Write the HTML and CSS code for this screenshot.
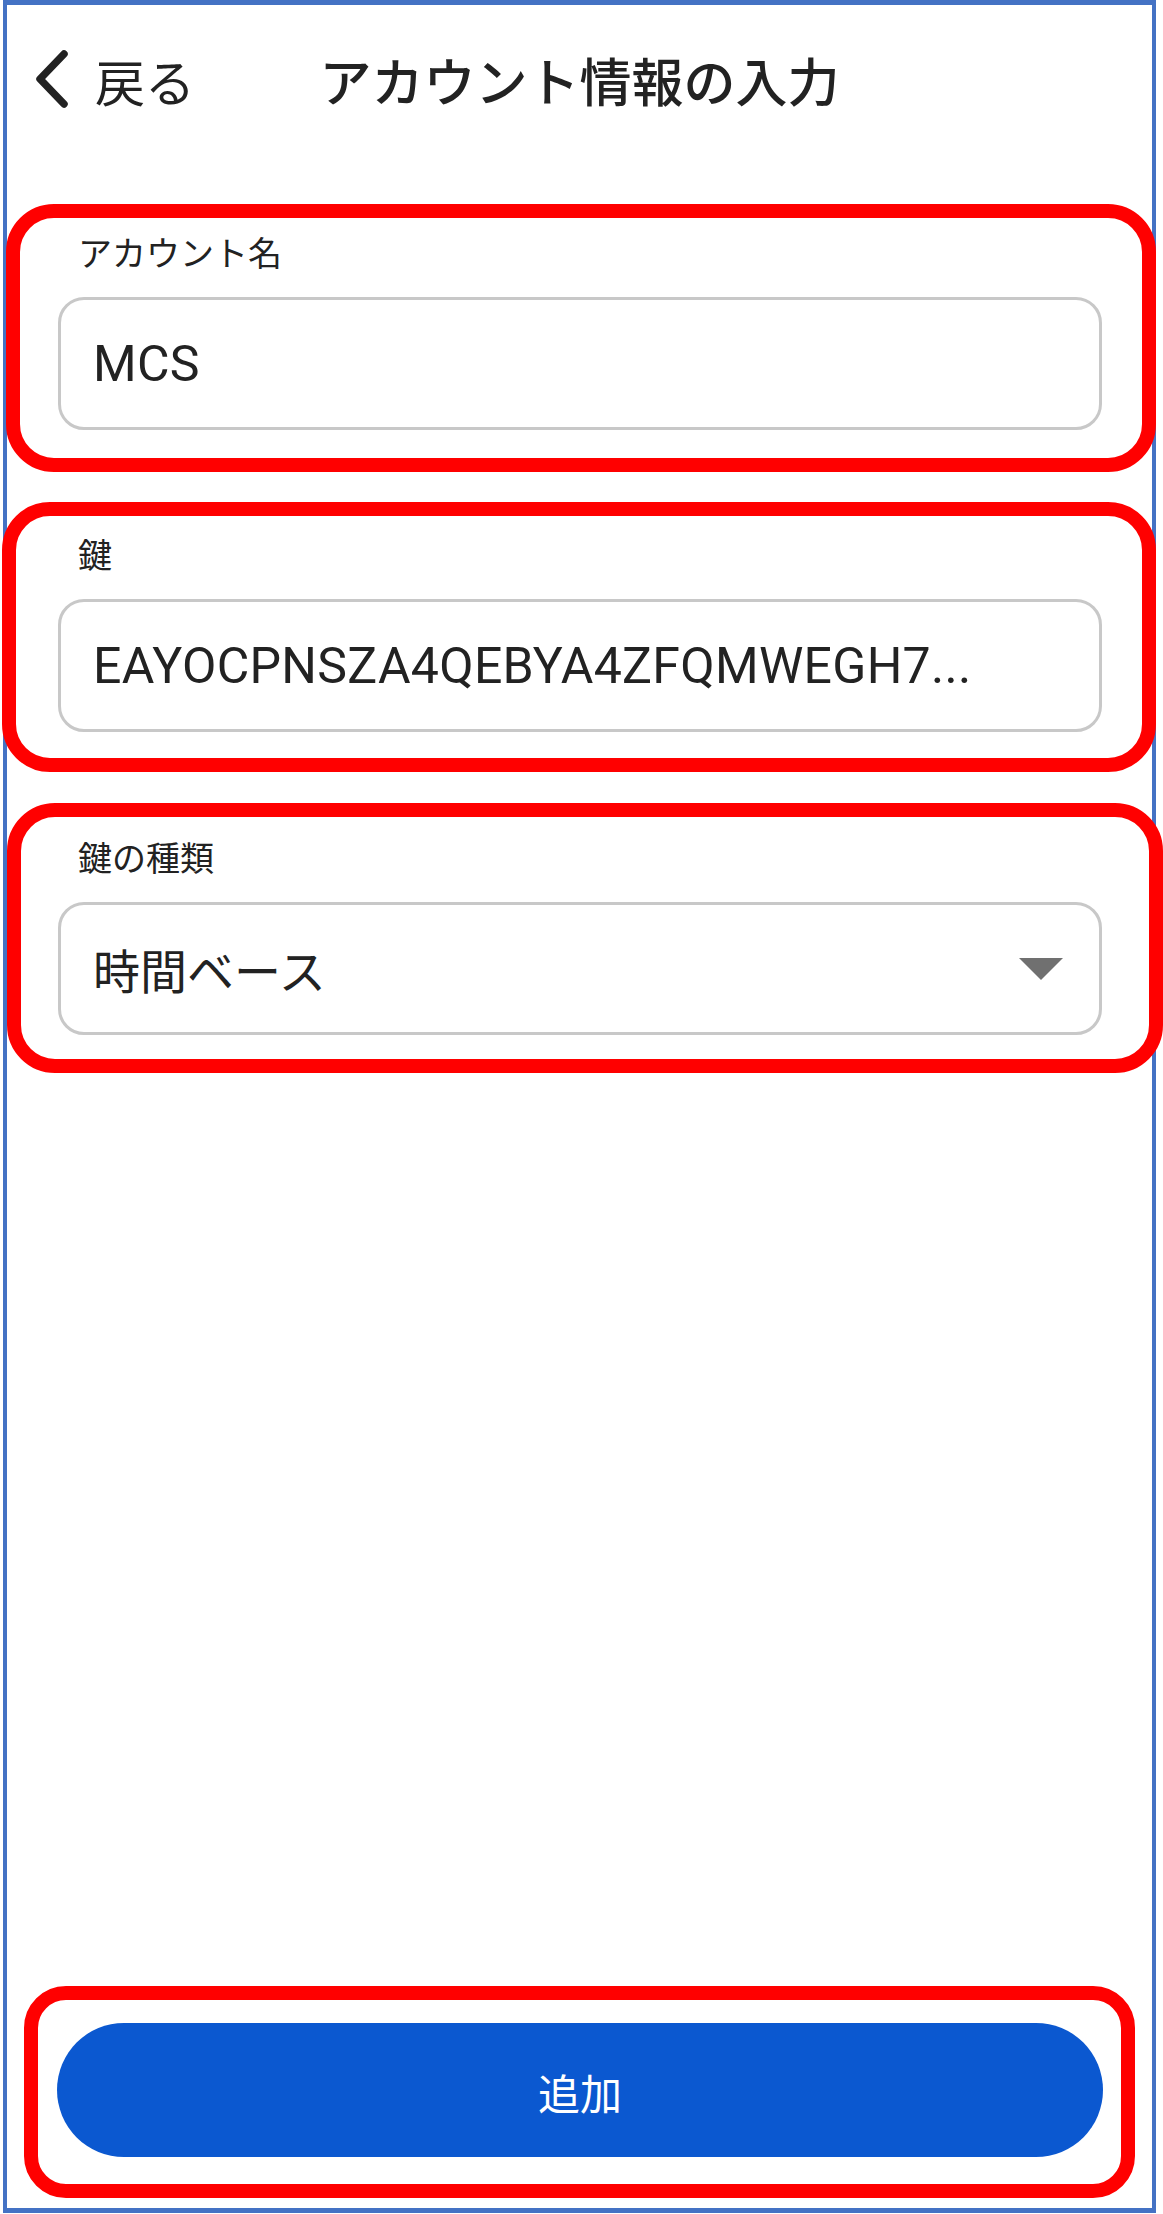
FILE: index.html
```html
<!DOCTYPE html>
<html lang="ja">
<head>
<meta charset="utf-8">
<title>アカウント情報の入力</title>
<link rel="stylesheet" href="styles.css">
</head>
<body>
<div class="frame">
  <header class="nav">
    <div class="back">
      <svg class="chev" viewBox="0 0 40 60" width="40" height="60" aria-hidden="true"><polyline points="31,4 7,29 31,54" fill="none" stroke="#222" stroke-width="7.5" stroke-linecap="round" stroke-linejoin="round"/></svg>
      <span class="back-label">戻る</span>
    </div>
    <h1 class="title">アカウント情報の入力</h1>
    <div class="nav-end"></div>
  </header>

  <main class="form">
    <section class="hl hl-name">
      <div class="field-label">アカウント名</div>
      <div class="field-box">MCS</div>
    </section>
    <section class="hl hl-key">
      <div class="field-label">鍵</div>
      <div class="field-box">EAYOCPNSZA4QEBYA4ZFQMWEGH7...</div>
    </section>
    <section class="hl hl-type">
      <div class="field-label">鍵の種類</div>
      <div class="field-box field-select">
        <span class="select-value">時間ベース</span>
        <svg class="caret" viewBox="0 0 44 22" width="44" height="22" aria-hidden="true"><polygon points="0,0 44,0 22,22" fill="#707070"/></svg>
      </div>
    </section>
  </main>

  <div class="spacer"></div>

  <footer class="hl hl-action">
    <button class="add-btn" type="button">追加</button>
  </footer>
</div>
</body>
</html>
```

FILE: styles.css
```css
* {
  box-sizing: border-box;
}

body {
  margin: 0;
  background: #ffffff;
  color: #222222;
  font-family: Roboto, "Noto Sans CJK JP", sans-serif;
}

.frame {
  margin: 0 7px 1px 3px;
  height: 2213px;
  border: 4px solid #4472c4;
  border-top-width: 5px;
  border-bottom-width: 5px;
  display: flex;
  flex-direction: column;
}

.nav {
  height: 150px;
  display: grid;
  grid-template-columns: 1fr auto 1fr;
  align-items: center;
}

.back {
  display: flex;
  align-items: center;
  gap: 22px;
  padding-left: 26px;
}

.chev {
  display: block;
  flex: none;
}

.back-label {
  font-family: "Noto Sans CJK JP", sans-serif;
  font-size: 50px;
  line-height: 60px;
}

.title {
  margin: 0;
  font-family: "Noto Sans CJK JP", sans-serif;
  font-size: 52px;
  font-weight: 500;
  line-height: 60px;
  color: #222222;
}

.form {
  display: flex;
  flex-direction: column;
}

.hl {
  border: 14px solid #ff0000;
  border-radius: 48px;
  background: #ffffff;
}

.hl-name {
  margin: 49px -4px 0 -1px;
  padding: 14px 40px 28px 38px;
}

.hl-key {
  margin: 30px -4px 0 -5px;
  padding: 18px 40px 26px 42px;
}

.hl-type {
  margin: 31px -11px 0 0;
  padding: 20px 47px 24px 37px;
}

.field-label {
  font-family: "Noto Sans CJK JP", sans-serif;
  font-size: 34px;
  line-height: 40px;
  padding-left: 20px;
  margin-bottom: 25px;
  color: #222222;
}

.field-box {
  height: 133px;
  border: 3px solid #c8c8c8;
  border-radius: 26px;
  display: flex;
  align-items: center;
  padding: 0 36px 0 32px;
  font-size: 50px;
  letter-spacing: 0.3px;
  line-height: 60px;
  color: #222222;
  white-space: nowrap;
}

.field-select {
  justify-content: space-between;
}

.select-value {
  font-family: "Noto Sans CJK JP", sans-serif;
  font-size: 47px;
  letter-spacing: 0;
}

.caret {
  display: block;
  flex: none;
}

.spacer {
  flex: 1;
}

.hl-action {
  margin: 0 17px 10px 17px;
  padding: 23px 18px 27px 19px;
  border-radius: 42px;
}

.add-btn {
  display: block;
  width: 100%;
  height: 134px;
  border: 0;
  border-radius: 67px;
  background: #0b58d0;
  color: #ffffff;
  font-family: "Noto Sans CJK JP", sans-serif;
  font-size: 42px;
  line-height: 60px;
  padding: 4px 0 0;
  cursor: pointer;
}
```
